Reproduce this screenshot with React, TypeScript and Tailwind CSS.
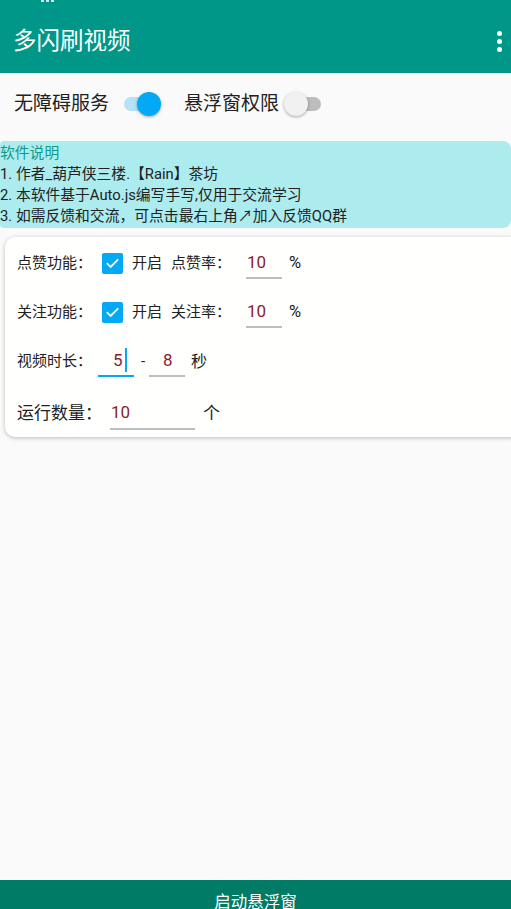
import React from "react";

const font = { fontFamily: "Roboto, 'Noto Sans CJK SC', 'Noto Sans', sans-serif" };

function Switch({ on }: { on: boolean }) {
  return (
    <div className="relative w-[38px] h-[26px] flex items-center">
      <div className={`w-[36px] h-[14px] rounded-full ${on ? "bg-[#b5e2f9]" : "bg-[#bdbdbd]"}`} />
      <div
        className={`absolute top-[1px] w-[24px] h-[24px] rounded-full shadow-[0_1px_3px_rgba(0,0,0,0.35)] ${
          on ? "left-[13px] bg-[#03a9f4]" : "left-[-1px] bg-[#f1f1f1]"
        }`}
      />
    </div>
  );
}

function Check() {
  return (
    <div className="w-[21px] h-[21px] rounded-[2px] bg-[#03a9f4] flex items-center justify-center">
      <svg width="15" height="15" viewBox="0 0 24 24" fill="none">
        <path d="M4 12.5l5 5L20 6.5" stroke="white" strokeWidth="3" strokeLinecap="square" />
      </svg>
    </div>
  );
}

function Field({
  value,
  w,
  pl,
  active,
}: {
  value: string;
  w: string;
  pl: string;
  active?: boolean;
}) {
  return (
    <div className={`relative h-[34px] ${w} flex items-center`}>
      <span className={`${pl} text-[17px] text-[#8b1c2c] leading-none flex items-center`}>
        {value}
        {active && <span className="ml-[2px] w-[2px] h-[24px] bg-[#03a9f4] inline-block" />}
      </span>
      <div
        className={`absolute left-0 right-0 bottom-0 ${active ? "h-[2px] bg-[#03a9f4]" : "h-[2px] bg-[#bdbdbd]"}`}
      />
    </div>
  );
}

export default function App() {
  return (
    <div style={font} className="w-[511px] h-[909px] bg-[#fafafa] flex flex-col overflow-hidden text-[#212121]">
      {/* toolbar */}
      <div className="relative h-[73px] bg-[#009688] flex items-center justify-between pl-[13px] pr-[8px] shrink-0">
        <div className="absolute left-[41px] top-0 flex gap-[2px]">
          <div className="w-[3px] h-[2px] bg-white/80" />
          <div className="w-[3px] h-[2px] bg-white/80" />
          <div className="w-[3px] h-[2px] bg-white/80" />
        </div>
        <span className="text-white text-[23.5px] pt-[10px]">多闪刷视频</span>
        <div className="flex flex-col gap-[3px] pt-[9px] pr-[1px]">
          <div className="w-[5px] h-[5px] rounded-full bg-white" />
          <div className="w-[5px] h-[5px] rounded-full bg-white" />
          <div className="w-[5px] h-[5px] rounded-full bg-white" />
        </div>
      </div>

      {/* permission switches */}
      <div className="h-[68px] flex items-center pl-[14px] pb-[6px] text-[19px] shrink-0">
        <span>无障碍服务</span>
        <div className="ml-[15px]">
          <Switch on />
        </div>
        <span className="ml-[22px]">悬浮窗权限</span>
        <div className="ml-[6px]">
          <Switch on={false} />
        </div>
      </div>

      {/* description */}
      <div className="h-[87px] bg-[#adecee] rounded-r-[8px] rounded-l-[4px] text-[14.8px] leading-[21px] pt-[2px] shrink-0">
        <div className="text-[#0f9a8c]">软件说明</div>
        <div>1. 作者_葫芦侠三楼.【Rain】茶坊</div>
        <div>2. 本软件基于Auto.js编写手写,仅用于交流学习</div>
        <div>3. 如需反馈和交流，可点击最右上角↗加入反馈QQ群</div>
      </div>

      {/* settings card */}
      <div className="mt-[9px] ml-[5px] mr-[-10px] h-[200px] bg-[#fffffd] rounded-[10px] shadow-[0_1px_4px_rgba(0,0,0,0.25)] pt-[2px] shrink-0 text-[15px]">
        <div className="h-[49px] flex items-center pl-[12px]">
          <span className="w-[85px]">点赞功能：</span>
          <Check />
          <span className="ml-[9px]">开启</span>
          <span className="ml-[9px]">点赞率：</span>
          <div className="ml-[15px] mt-[-3px]">
            <Field value="10" w="w-[36px]" pl="pl-[1px]" />
          </div>
          <span className="ml-[7px] text-[16.5px]">%</span>
        </div>
        <div className="h-[49px] flex items-center pl-[12px]">
          <span className="w-[85px]">关注功能：</span>
          <Check />
          <span className="ml-[9px]">开启</span>
          <span className="ml-[9px]">关注率：</span>
          <div className="ml-[15px] mt-[-3px]">
            <Field value="10" w="w-[36px]" pl="pl-[1px]" />
          </div>
          <span className="ml-[7px] text-[16.5px]">%</span>
        </div>
        <div className="h-[49px] flex items-center pl-[12px]">
          <span className="w-[81px]">视频时长：</span>
          <div className="mt-[-3px]">
            <Field value="5" w="w-[36px]" pl="pl-[15px]" active />
          </div>
          <span className="ml-[7px] w-[8px]">-</span>
          <div className="mt-[-3px]">
            <Field value="8" w="w-[36px]" pl="pl-[14px]" />
          </div>
          <span className="ml-[6px] text-[16px]">秒</span>
        </div>
        <div className="h-[49px] flex items-center pl-[12px] pt-[7px] text-[17px]">
          <span className="w-[93px]">运行数量：</span>
          <div className="mt-[-3px]">
            <Field value="10" w="w-[85px]" pl="pl-[1px]" />
          </div>
          <span className="ml-[8px]">个</span>
        </div>
      </div>

      <div className="flex-1" />

      {/* bottom action */}
      <div className="h-[29px] bg-[#007b65] flex justify-center shrink-0">
        <span className="text-white text-[16.5px] pt-[15px] leading-none">启动悬浮窗</span>
      </div>
    </div>
  );
}
